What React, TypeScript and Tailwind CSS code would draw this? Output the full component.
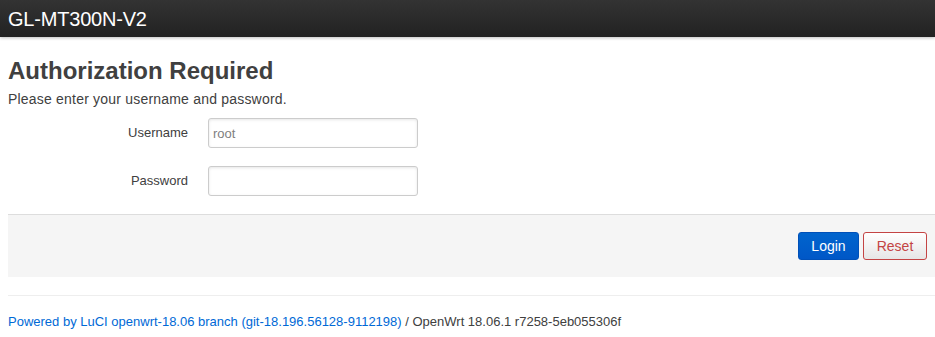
import React from 'react';

// LuCI bootstrap-style login page for a GL.iNet router.
export default function App() {
  return (
    <div className="min-h-[337px] w-[935px] overflow-hidden bg-white text-[#404040] font-['Liberation_Sans',Arial,sans-serif]">
      <header className="h-[37px] bg-gradient-to-b from-[#333333] to-[#222222] shadow-[0_1px_3px_rgba(0,0,0,0.25)] flex items-center pl-2">
        <span className="text-white text-[20px] leading-none tracking-[-0.2px]">GL-MT300N-V2</span>
      </header>

      <div className="pl-2">
        <h2 className="mt-[20px] text-[24px] leading-[28px] font-bold">Authorization Required</h2>
        <p className="mt-[6px] text-[14px] leading-[16px] tracking-[0.2px]">Please enter your username and password.</p>

        <div className="mt-[11px] flex flex-col gap-[18px]">
          <div className="flex items-center">
            <label className="w-[180px] text-right text-[13px]">Username</label>
            <input
              defaultValue="root"
              className="ml-[20px] w-[210px] h-[30px] rounded-[3px] border border-[#cccccc] px-[4px] text-[13px] text-[#808080] shadow-[inset_0_1px_3px_rgba(0,0,0,0.1)] outline-none"
            />
          </div>
          <div className="flex items-center">
            <label className="w-[180px] text-right text-[13px]">Password</label>
            <input
              type="password"
              className="ml-[20px] w-[210px] h-[30px] rounded-[3px] border border-[#cccccc] px-[4px] text-[13px] shadow-[inset_0_1px_3px_rgba(0,0,0,0.1)] outline-none"
            />
          </div>
        </div>

        <div className="mt-[18px] h-[63px] border-t border-[#dddddd] bg-[#f5f5f5] flex items-center justify-end gap-[4px] pr-[8px]">
          <button className="h-[28px] w-[61px] rounded-[3px] bg-gradient-to-b from-[#0064cd] to-[#0057c7] border border-[#0050b8] text-white text-[14px]">
            Login
          </button>
          <button className="h-[28px] w-[64px] rounded-[3px] bg-gradient-to-b from-white to-[#e6e6e6] border border-[#c44444] text-[#c44444] text-[14px]">
            Reset
          </button>
        </div>

        <div className="mt-[18px] border-t border-[#eeeeee] pt-[18px] text-[13px] leading-[16px]">
          <a className="text-[#0069d6]">Powered by LuCI openwrt-18.06 branch (git-18.196.56128-9112198)</a>
          <span> / OpenWrt 18.06.1 r7258-5eb055306f</span>
        </div>
      </div>
    </div>
  );
}
